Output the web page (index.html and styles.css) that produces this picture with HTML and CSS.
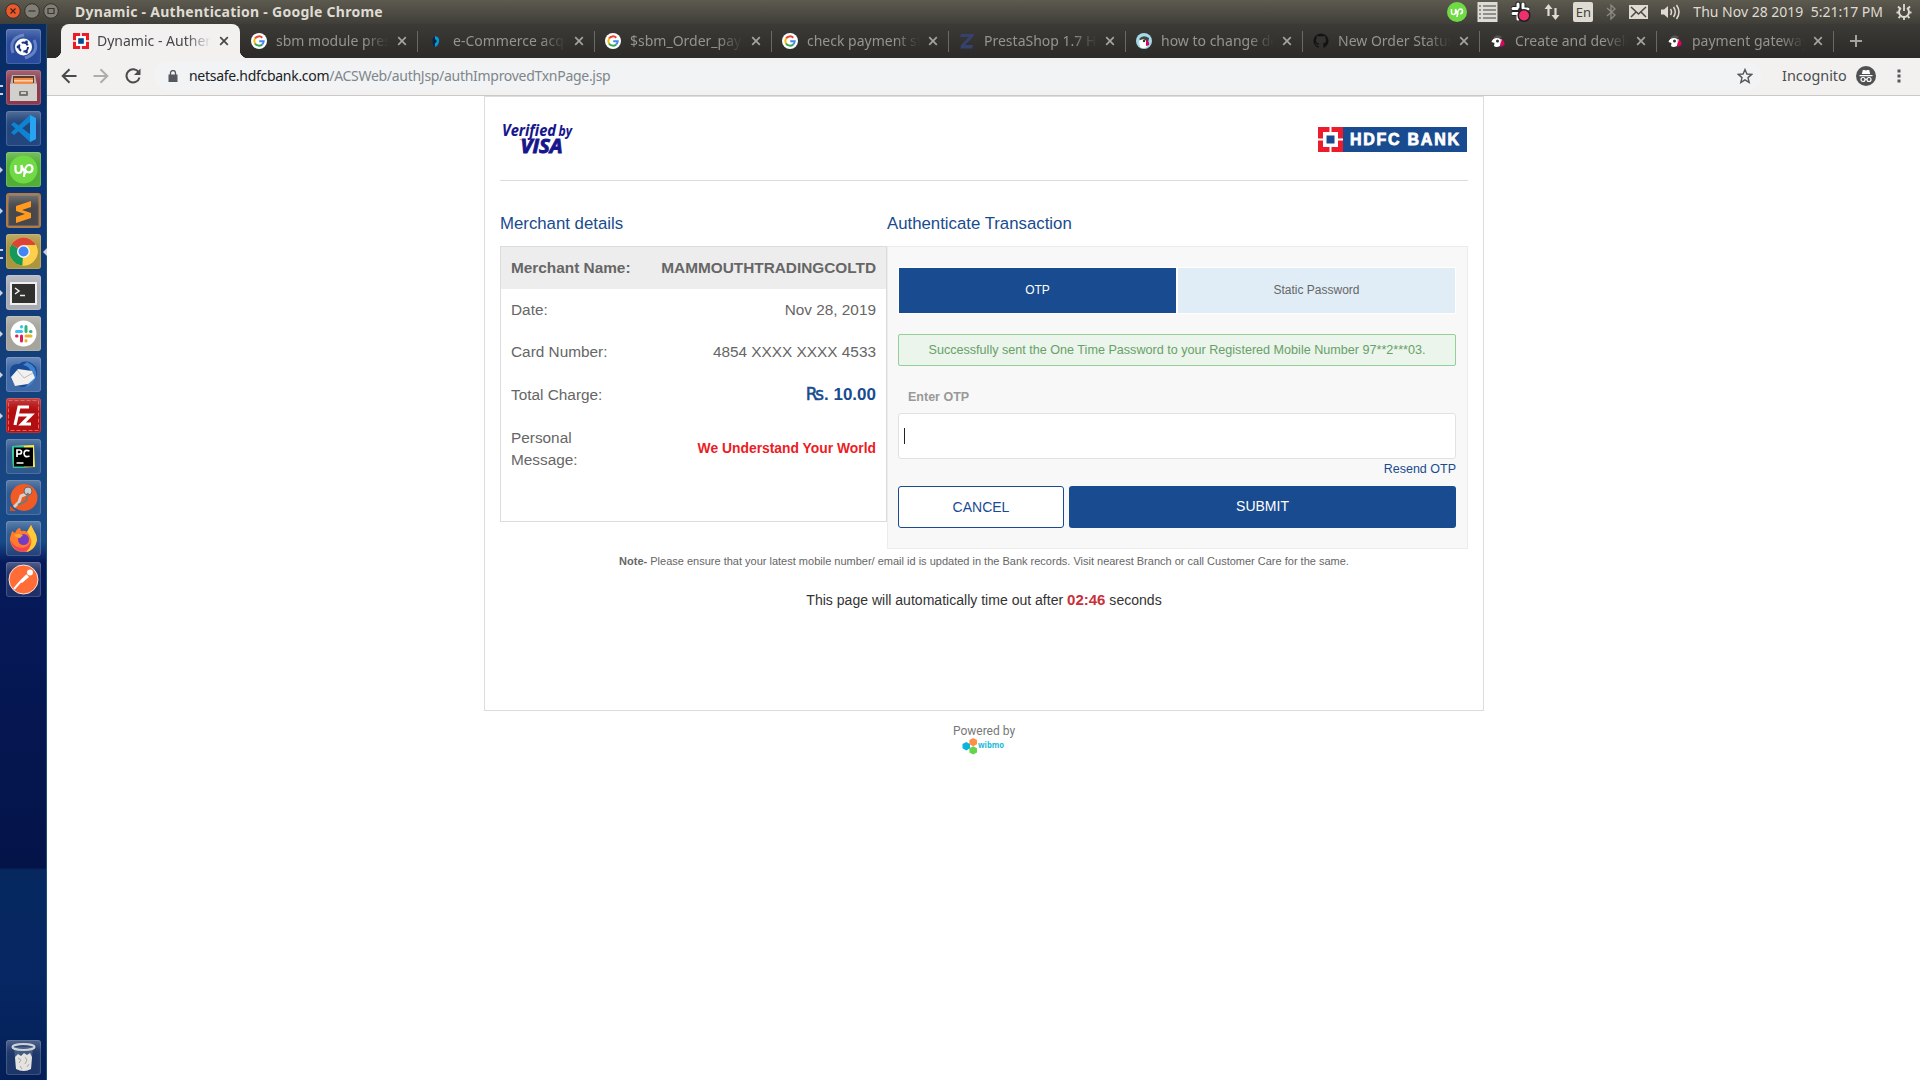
FILE: index.html
```html
<!DOCTYPE html>
<html lang="en">
<head>
<meta charset="utf-8">
<title>Dynamic - Authentication</title>
<link rel="stylesheet" href="styles.css">
</head>
<body>
<svg class="defs" aria-hidden="true">
  <symbol id="google" viewBox="0 0 16 16"><circle cx="8" cy="8" r="8" fill="#fff"/><g fill="none" stroke-width="2"><path d="M4 5.6A4.7 4.7 0 0 1 11.3 4.7" stroke="#ea4335"/><path d="M4 5.6a4.7 4.7 0 0 0 0 4.8" stroke="#fbbc05"/><path d="M4 10.4a4.7 4.7 0 0 0 7.2 1" stroke="#34a853"/><path d="M11.2 11.4A4.6 4.6 0 0 0 12.7 8.2H8.2" stroke="#4285f4"/></g></symbol>
  <symbol id="close" viewBox="0 0 10 10"><path d="M1.2 1.2l7.6 7.6M8.8 1.2L1.2 8.8" stroke="currentColor" stroke-width="1.7"/></symbol>
  <symbol id="puffin" viewBox="0 0 16 16"><path d="M3 5Q7 0 12 4l-2 2z" fill="#555"/><path d="M1.500 9q1-4 5.500-4 4 0 4 4l-1 4q-4 2-6 0l.5-3z" fill="#fff"/><circle cx="7.500" cy="8" r="1.500" fill="#333"/><path d="M11 6q4 2 3.500 6L10.500 14z" fill="#df0067"/><path d="M10 6l2 .5-1.500 4z" fill="#e9d9a0"/></symbol>
</svg>
<header class="menubar">
  <div class="window-buttons">
    <svg width="16" height="16" viewBox="0 0 16 16"><circle cx="8" cy="8" r="7.3" fill="#ec5a2b" stroke="#33312c"/><path d="M5.500 5.500l5 5m0-5l-5 5" stroke="#40241a" stroke-width="1.200"/></svg>
    <svg width="16" height="16" viewBox="0 0 16 16"><circle cx="8" cy="8" r="7.3" fill="#817e76" stroke="#33312c"/><path d="M4.500 8h7" stroke="#38362f" stroke-width="1.200"/></svg>
    <svg width="16" height="16" viewBox="0 0 16 16"><circle cx="8" cy="8" r="7.3" fill="#817e76" stroke="#33312c"/><path d="M5 5.500h6v5H5z" fill="none" stroke="#38362f" stroke-width="1.200"/></svg>
  </div>
  <div class="window-title">Dynamic - Authentication - Google Chrome</div>
  <div class="indicators">
    <svg class="up" width="20" height="22" viewBox="0 0 20 22"><circle cx="10" cy="11" r="10" fill="#6fda44"/><path d="M4.500 8v3.500q0 2 2 2t2-2V8q1 4 3 5.500M10 16q.5-8 3.500-8 2 0 2 2.300 0 2.500-2.400 2.500" fill="none" stroke="#fff" stroke-width="1.500"/></svg>
    <svg width="21" height="20" viewBox="0 0 21 20"><path d="M.5 0h20v20H.5z" fill="#dedcd7"/><path d="M2 4h2m2 0h13M2 8h2m2 0h13M2 12h2m2 0h13M2 16h2m2 0h13" stroke="#77756e" stroke-width="1.500"/></svg>
    <svg width="21" height="21" viewBox="0 0 21 21"><g stroke="#222" stroke-width="5" stroke-linecap="round"><path d="M8 3v4M13 3.500V8M3.500 7.500H8M13 8h4.500M3.500 12.500H8"/></g><g stroke="#fff" stroke-width="3" stroke-linecap="round"><path d="M8 3v3M13 3v4M3 7.500h4M14 8h4M3 12.500h5M8 13v5"/></g><circle cx="14" cy="14.500" r="5.800" fill="#f0306e" stroke="#222" stroke-width="1.500"/></svg>
    <svg width="18" height="18" viewBox="0 0 18 18"><path d="M5.500 13V4M12.500 5v9" stroke="#dfdbd2" stroke-width="2.200"/><path d="M1.500 6l4-5 4 5zM8.500 12l4 5 4-5z" fill="#dfdbd2"/></svg>
    <span class="keyboard">En</span>
    <svg width="12" height="18" viewBox="0 0 12 18"><path d="M2 5l8 7-4 4V2l4 4-8 7" fill="none" stroke="#8e8b83" stroke-width="1.300"/></svg>
    <svg width="19" height="14" viewBox="0 0 19 14"><path d="M0 0h19v14H0z" fill="#dfdbd2"/><path d="M2 2l7.500 7L17 2M2 12l5-5m10 5l-5-5" stroke="#494740" stroke-width="1.500" fill="none"/></svg>
    <svg width="21" height="18" viewBox="0 0 21 18"><path d="M1 6.500h3L8 3v12l-4-3.500H1z" fill="#dfdbd2"/><path d="M10.500 6q2 3 0 6M13.500 4q3.500 5 0 10M16.500 2q5 7 0 14" stroke="#dfdbd2" stroke-width="1.500" fill="none"/></svg>
    <span class="clock">Thu Nov 28 2019&nbsp; 5:21:17 PM</span>
    <svg width="18" height="18" viewBox="0 0 18 18"><path d="M6 5a5 5 0 1 0 6 0" fill="none" stroke="#dfdbd2" stroke-width="2"/><path d="M9 1v7M1.500 9.500h2m11 0h2M3 3.500l2 2M15 3.500l-2 2M3.500 15l1.700-1.700M14.500 15l-1.700-1.700M9 14v3" stroke="#dfdbd2" stroke-width="1.800"/></svg>
  </div>
</header>
<div class="desktop">
  <nav class="launcher">
    <div class="tile t-dash"><svg viewBox="0 0 35 35"><path d="M7 24Q2 9 18 6M28 11q6 13-9 18" fill="none" stroke="#8ea6d8" stroke-width="3" opacity=".6"/><circle cx="17.500" cy="18" r="8.500" fill="#fff"/><circle cx="17.500" cy="18" r="4.500" fill="none" stroke="#17357f" stroke-width="2" stroke-dasharray="7 2.400"/><circle cx="12" cy="18" r="1.400" fill="#17357f"/><circle cx="20.500" cy="13" r="1.400" fill="#17357f"/><circle cx="20.500" cy="23" r="1.400" fill="#17357f"/></svg></div>
    <div class="tile t-files run2"><svg viewBox="0 0 35 35"><path d="M6 5h23l2 10v16H4V15z" fill="#b9b6b0"/><path d="M7 6h21v7H7z" fill="#5b3b2c"/><path d="M8 8h19v6H8z" fill="#f08a4b"/><path d="M8 10h19v1.500H8z" fill="#ffd2a8"/><path d="M4 14h27v17H4z" fill="#d2d0cc"/><rect x="13" y="21" width="9" height="5" rx="1" fill="#77746e"/><path d="M15 23h5" stroke="#eee" stroke-width="1.500"/></svg></div>
    <div class="tile t-glass"><svg viewBox="0 0 35 35"><path d="M24 4l6 3v21l-6 3L5 13.500 8 11l16 12V11L8 24l-3-2.500z" fill="#0d83d2"/><path d="M24 4l6 3v21l-6 3z" fill="#27a3f2"/></svg></div>
    <div class="tile t-up run"><svg viewBox="0 0 35 35"><circle cx="17.500" cy="17.500" r="14" fill="#6fda44"/><path d="M9.500 13v5q0 3 3 3t3-3v-5q1.500 6 5 8M18 25q.5-12 5-12 3.500 0 3.500 3.500T23 20.500q-2 0-4-3" fill="none" stroke="#fff" stroke-width="2.200"/></svg></div>
    <div class="tile t-sublime run"><svg viewBox="0 0 35 35"><path d="M10 13l15-5v6l-9 3 9 3v5l-15 5v-6l9-3-9-3z" fill="#ff9a1f"/></svg></div>
    <div class="tile t-chrome run2 active"><svg viewBox="0 0 35 35"><circle cx="17.500" cy="17.500" r="14" fill="#fcd04b"/><path d="M17.500 17.500L5.400 10.500a14 14 0 0 1 24.200 0z" fill="#db4437"/><path d="M17.500 17.500L5.400 10.500a14 14 0 0 0 11 21l6-10z" fill="#149959"/><path d="M17.500 11h12.500a14 14 0 0 1-13.600 20.500z" fill="#fcd04b"/><circle cx="17.500" cy="17.500" r="6.500" fill="#f5f5f5"/><circle cx="17.500" cy="17.500" r="5" fill="#4285f4"/></svg></div>
    <div class="tile t-term run"><svg viewBox="0 0 35 35"><path d="M4 7h27v23H4z" fill="#eee"/><path d="M6 9h23v19H6z" fill="#30312f"/><path d="M9 13l4 3-4 3M14 20.500h5" fill="none" stroke="#eee" stroke-width="1.500"/></svg></div>
    <div class="tile t-slack run"><svg viewBox="0 0 35 35"><circle cx="17.500" cy="17.500" r="13" fill="#fff"/><g stroke-width="3" stroke-linecap="round"><path d="M15.500 10.500v.5M10.500 15.500h5" stroke="#36c5f0"/><path d="M20 10.500v5M24.500 15.500h.5" stroke="#2eb67d"/><path d="M15.500 20v5M10.500 20h.5" stroke="#e01e5a"/><path d="M20 20h5M20 24.500v.5" stroke="#ecb22e"/></g></svg></div>
    <div class="tile t-bird run"><svg viewBox="0 0 35 35"><path d="M4 18Q3 6 13 7q8-6 17 3 3 9-3 15-8 8-17 3-5-4-6-10z" fill="#1a4b95"/><path d="M21 5q11 5 9 15-3 8-11 11 7-9 6-15-1-7-8-8z" fill="#3f83cf"/><path d="M5 20l7-8 14 2 3 7-7 6-13 2z" fill="#f2f1f0"/><path d="M11 13l7 8 9-5" fill="none" stroke="#b9bcc4"/></svg></div>
    <div class="tile t-fz run"><svg viewBox="0 0 35 35"><path d="M2.500 2.500h30v30h-30z" fill="none" stroke="#d66" stroke-dasharray="4 2"/><path d="M9 27l4-18h10M11.500 17h8M16 17h9l-9 9h9" fill="none" stroke="#fff" stroke-width="3.200"/></svg></div>
    <div class="tile t-glass"><svg viewBox="0 0 35 35"><path d="M6 7l22-1 1 22-22 1z" fill="#f4e94e"/><path d="M6 7h12v22H7z" fill="#28c9a0"/><path d="M8 8.500h19v19H8z" fill="#000"/><path d="M11 18v-7h2.500q2 0 2 2t-2 2H11M23.500 12q-5-2-5.500 2.500.5 4.500 5.500 2.500M10.500 24h7" fill="none" stroke="#fff" stroke-width="1.700"/></svg></div>
    <div class="tile t-glass"><svg viewBox="0 0 35 35"><circle cx="18" cy="17.500" r="13.500" fill="#f15a24"/><path d="M4 26v5h6z" fill="#d9501f"/><path d="M8 27l5-5 2-6 8-3" fill="none" stroke="#d7d3cc" stroke-width="3"/><circle cx="22" cy="11" r="4" fill="#ccc" stroke="#666"/><path d="M12 25l8-4 2-8" fill="none" stroke="#777" stroke-width="2"/></svg></div>
    <div class="tile t-glass"><svg viewBox="0 0 35 35"><path d="M4 17l2-7 3 2q2-5 5-5l1 3q4-1 6 1l4-7 3 6q3 4 3 9-2 12-13.500 12T4 19z" fill="#ff7a2b"/><path d="M25 4l3 6q3 4 3 9-2 10-11 12 7-7 5-13-1-4-4-7z" fill="#ffc93a"/><path d="M4.500 19q4 8 12 8 6-1 8-6 0 8-7 10Q7 30 4.500 19z" fill="#f5415c"/><circle cx="17.500" cy="18.500" r="5.500" fill="#743cc4"/><path d="M8 14q5-2 9 0l-3 3q-4 0-6-3z" fill="#ffa52e"/></svg></div>
    <div class="tile t-glass"><svg viewBox="0 0 35 35"><circle cx="17.500" cy="17.500" r="14.500" fill="#ff6c37" stroke="#f5e5df"/><path d="M8 27l7-8 6-6" stroke="#fff" stroke-width="2"/><path d="M14 20l7-7 2 2-7 6z" fill="#fff"/><circle cx="24" cy="10.500" r="3" fill="#fff"/></svg></div>
    <div class="tile t-glass trash"><svg viewBox="0 0 35 35"><path d="M8 7l2 22q7 4 15 0l2-22z" fill="#7288a4" opacity=".45"/><path d="M9 17l3-3 3 2 3-3 3 2 3-2 2 4-1 12q-7 4-15 0z" fill="#e4e3df"/><path d="M12 18l3 2-2 3m6-6l2 3-2 4m4 0l-2 3m-7-1l2 3" stroke="#aaa9a3" fill="none"/><ellipse cx="17.500" cy="7" rx="11" ry="3" fill="none" stroke="#cfd3d6" stroke-width="2.200"/></svg></div>
  </nav>
  <div class="browser">
    <div class="tabstrip">
      <div class="tab current"><svg class="fav" viewBox="0 0 16 16"><path d="M0 0h16v16H0z" fill="#ed1c24"/><path d="M3 3h10v10H3zM7.200 0h1.600v16H7.200zM0 7.200h16v1.600H0z" fill="#fff"/><path d="M5.200 5.200h5.600v5.600H5.200z" fill="#004c8f"/></svg><span class="label">Dynamic - Authentication</span><svg class="x"><use href="#close"/></svg></div>
      <div class="tab"><svg class="fav"><use href="#google"/></svg><span class="label">sbm module prestashop</span><svg class="x"><use href="#close"/></svg></div>
      <div class="tab"><svg class="fav" viewBox="0 0 16 16"><path d="M7 3q-6 5 0 11z" fill="#152c50"/><path d="M7 3q5 1 4 6-1 4-4 5z" fill="#0799d4"/><path d="M5 4l4 4-4 5z" fill="#0c2344"/></svg><span class="label">e-Commerce acquiring</span><svg class="x"><use href="#close"/></svg></div>
      <div class="tab"><svg class="fav"><use href="#google"/></svg><span class="label">$sbm_Order_payment</span><svg class="x"><use href="#close"/></svg></div>
      <div class="tab"><svg class="fav"><use href="#google"/></svg><span class="label">check payment status</span><svg class="x"><use href="#close"/></svg></div>
      <div class="tab"><svg class="fav" viewBox="0 0 16 16"><path d="M2 1h13l-1 3-8 8h8l-1 3.500H1.500L2 12l8-8H1z" fill="#35426e"/></svg><span class="label">PrestaShop 1.7 Hooks</span><svg class="x"><use href="#close"/></svg></div>
      <div class="tab"><svg class="fav" viewBox="0 0 16 16"><circle cx="8" cy="8" r="8" fill="#a4dbe8"/><path d="M3 6q4-5 10-1l-1 5-3 1z" fill="#444"/><path d="M3 8q5-4 8 1v5q-4 2-7 0z" fill="#fff"/><path d="M10 7q4 2 3 5l-3 1z" fill="#df0067"/><circle cx="8" cy="8" r="1.200" fill="#333"/></svg><span class="label">how to change default</span><svg class="x"><use href="#close"/></svg></div>
      <div class="tab"><svg class="fav" viewBox="0 0 16 16"><path d="M8 .5a7.500 7.500 0 0 0-2.400 14.600v-2.300q-2 .4-2.700-1.200-.5-1.200-1-1.500 1-.2 1.700.9.800 1.200 2.100.6l.4-1Q3 10.200 3 7q0-1.200.8-2.100-.3-1 .1-2.200 1 0 2.200.9 2-.5 3.900 0 1.200-.9 2.100-.9.5 1.200.1 2.200.8.9.8 2.100 0 3.200-3.100 3.600.5.6.5 1.500v3A7.500 7.500 0 0 0 8 .5z" fill="#131313"/></svg><span class="label">New Order Status</span><svg class="x"><use href="#close"/></svg></div>
      <div class="tab"><svg class="fav"><use href="#puffin"/></svg><span class="label">Create and develop</span><svg class="x"><use href="#close"/></svg></div>
      <div class="tab"><svg class="fav"><use href="#puffin"/></svg><span class="label">payment gateway</span><svg class="x"><use href="#close"/></svg></div>
      <svg class="newtab" viewBox="0 0 12 12"><path d="M6 0v12M0 6h12" stroke="#a5a39d" stroke-width="2"/></svg>
    </div>
    <div class="toolbar">
      <svg width="16" height="16" viewBox="0 0 16 16"><path d="M15.500 8H2M8.500 1.200L1.700 8l6.800 6.800" fill="none" stroke="#494a4b" stroke-width="2"/></svg>
      <svg width="16" height="16" viewBox="0 0 16 16"><path d="M.5 8H14M7.500 1.200L14.300 8l-6.800 6.800" fill="none" stroke="#adadac" stroke-width="2"/></svg>
      <svg width="16" height="16" viewBox="0 0 16 16"><path d="M13.800 4.500A6.600 6.600 0 1 0 14.500 9.500" fill="none" stroke="#494a4b" stroke-width="2"/><path d="M15.500.5v6.500H9z" fill="#494a4b"/></svg>
      <div class="omnibox">
        <svg width="10" height="12" viewBox="0 0 10 12"><path d="M.5 4.500h9V12h-9z" fill="#55585c"/><path d="M2.500 5V3a2.500 2.500 0 0 1 5 0v2" fill="none" stroke="#55585c" stroke-width="1.300"/></svg>
        <span class="url"><b>netsafe.hdfcbank.com</b>/ACSWeb/authJsp/authImprovedTxnPage.jsp</span>
        <svg width="16" height="16" viewBox="0 0 16 16"><path d="M8 1.500l1.900 4.500 4.800.4-3.700 3.200 1.200 4.800L8 11.800l-4.200 2.600L5 9.600 1.300 6.400 6.100 6z" fill="none" stroke="#55585c" stroke-width="1.400"/></svg>
      </div>
      <span class="incognito">Incognito</span>
      <svg width="20" height="20" viewBox="0 0 20 20"><circle cx="10" cy="10" r="10" fill="#505153"/><path d="M6.800 4h1.800l1.400.5 1.400-.5h1.800l1 4H5.800zM3.500 9h13v1.200h-13z" fill="#fff"/><circle cx="7" cy="13.500" r="2" fill="none" stroke="#fff" stroke-width="1.200"/><circle cx="13" cy="13.500" r="2" fill="none" stroke="#fff" stroke-width="1.200"/><path d="M9 13.300h2" stroke="#fff"/></svg>
      <svg class="dots" width="4" height="14" viewBox="0 0 4 14"><path d="M.5.5h3v3h-3zM.5 5.500h3v3h-3zM.5 10.500h3v3h-3z" fill="#55565a"/></svg>
    </div>
    <main class="page">
      <section class="card">
        <div class="brands">
          <svg class="vbv" width="72" height="36" viewBox="0 0 72 36"><path d="M16.500 17h6l1.500 7q-2.500-5.500-7.500-7z" fill="#e8a33d"/><g fill="#16168c" stroke="#16168c" font-family="Open Sans, sans-serif" font-style="italic" font-weight="700"><text x="0" y="13.500" font-size="16.500" stroke-width=".1" textLength="54" lengthAdjust="spacingAndGlyphs">Verified</text><text x="56.500" y="13.500" font-size="13.500" stroke-width=".1" textLength="13.500" lengthAdjust="spacingAndGlyphs">by</text><text x="18.500" y="31" font-size="19.500" stroke-width=".9" textLength="42" lengthAdjust="spacingAndGlyphs">VISA</text></g></svg>
          <svg class="hdfc" width="149" height="25" viewBox="0 0 149 25"><path d="M0 0h149v25H0z" fill="#184b8f"/><path d="M0 0h25v25H0z" fill="#ed1c2c"/><path d="M5 5h15v15H5zM11.500 0h2v25h-2zM0 11.500h25v2H0z" fill="#fff"/><path d="M8.500 8.500h8v8h-8z" fill="#184b8f"/><text x="32" y="18" font-family="Liberation Sans, sans-serif" font-weight="700" font-size="16" textLength="109" lengthAdjust="spacing" fill="#fff" stroke="#fff" stroke-width=".8">HDFC BANK</text></svg>
        </div>
        <div class="columns">
          <div class="merchant">
            <h2>Merchant details</h2>
            <div class="details">
              <div class="row head"><span>Merchant Name:</span><span>MAMMOUTHTRADINGCOLTD</span></div>
              <div class="row"><span>Date:</span><span>Nov 28, 2019</span></div>
              <div class="row"><span>Card Number:</span><span>4854 XXXX XXXX 4533</span></div>
              <div class="row total"><span>Total Charge:</span><strong><span class="rupee">₨</span>. 10.00</strong></div>
              <div class="row message"><span>Personal<br>Message:</span><em>We Understand Your World</em></div>
            </div>
          </div>
          <div class="auth">
            <h2>Authenticate Transaction</h2>
            <div class="panel">
              <div class="methods"><span class="on">OTP</span><span>Static Password</span></div>
              <p class="notice">Successfully sent the One Time Password to your Registered Mobile Number 97**2***03.</p>
              <label>Enter OTP</label>
              <div class="field"><i class="caret"></i></div>
              <a class="resend">Resend OTP</a>
              <div class="actions"><span class="cancel">CANCEL</span><span class="submit">SUBMIT</span></div>
            </div>
          </div>
        </div>
        <p class="note"><b>Note-</b> Please ensure that your latest mobile number/ email id is updated in the Bank records. Visit nearest Branch or call Customer Care for the same.</p>
        <p class="timeout">This page will automatically time out after <b>02:46</b> seconds</p>
      </section>
      <footer class="powered">Powered by
        <svg width="43" height="17" viewBox="0 0 43 17"><path d="M4.300 4l3.700 2v4.300l-3.700 2.200L.5 10.300V6z" fill="#0ab4dc"/><path d="M11.200 0L15 2v4.200l-3.800 2-3.800-2V2z" fill="#ff8f47"/><path d="M11.200 8.300l3.800 2v4.200l-3.800 2-3.800-2v-4.200z" fill="#63d44c"/><text x="16" y="10" font-family="Open Sans, sans-serif" font-weight="700" font-size="8" textLength="26" lengthAdjust="spacingAndGlyphs" fill="#1cb9d8">wibmo</text></svg>
      </footer>
    </main>
  </div>
</div>
</body>
</html>
```
FILE: styles.css
```css
* { box-sizing: border-box; }
body { margin: 0; width: 1920px; height: 1080px; overflow: hidden; background: #fff; font-family: "Liberation Sans", Arial, sans-serif; display: flex; flex-direction: column; }
.defs { display: none; }
svg { display: block; flex: none; }
p, h2 { margin: 0; }

.menubar { height: 24px; background: linear-gradient(#5d5a4f, #3f3e38); display: flex; align-items: center; font-family: "Noto Sans", sans-serif; color: #dfdbd2; padding-left: 5px; padding-bottom: 1px; }
.window-buttons { display: flex; gap: 3px; width: 70px; margin-top: -1px; }
.window-title { font-weight: 700; font-size: 14px; letter-spacing: .27px; flex: 1; }
.indicators { display: flex; align-items: center; gap: 12px; padding-right: 7px; }
.indicators .up { margin-right: -2px; }
.keyboard { width: 20px; height: 20px; border-radius: 2px; background: #dfdbd2; color: #45433c; font-size: 13px; line-height: 20px; text-align: center; }
.clock { font-size: 14px; white-space: nowrap; }

.desktop { flex: 1; display: flex; min-height: 0; }
.launcher { width: 47px; flex: none; padding: 5px 6px; display: flex; flex-direction: column; gap: 6px; background: linear-gradient(#082b62, #0b3474 15%, #15417c 35%, #184a88 49%, #06195a 51%, #041449 79.900%, #06285f 80.100%, #062763 90%, #041f58); border-right: 1px solid #214f71; }
.tile { position: relative; width: 35px; height: 35px; border-radius: 3px; box-shadow: inset 0 0 0 1px rgba(255,255,255,.14), inset 0 10px 10px -5px rgba(255,255,255,.25); flex: none; }
.tile svg { width: 35px; height: 35px; }
.trash { margin-top: auto; }
.t-glass { background-color: rgba(255,255,255,.1); }
.t-dash { background-color: #284a9c; }
.t-files { background-color: #8c3a4e; }
.t-up { background-color: #52ad37; }
.t-sublime { background-color: #48484a; border: 2px solid #b37a44; }
.t-sublime svg { margin: -2px; }
.t-chrome { background-color: #ab953e; }
.t-term { background-color: #a9abb3; }
.t-slack { background-color: #a5a59d; }
.t-bird { background-color: #4069a8; }
.t-fz { background-color: #b30e10; }
.run::before, .run2::before { content: ""; position: absolute; left: -7px; top: 14px; border: 4px solid transparent; border-left-color: #ccd2da; }
.t-sublime::before { left: -9px; top: 12px; }
.run2::before { width: 3px; height: 6px; top: 15px; left: -6px; border: solid #ccd2da; border-width: 2px 0; }
.active::after { content: ""; position: absolute; right: -6px; top: 14px; border: 4px solid transparent; border-right-color: #ccd2da; border-left: 0; }

.browser { flex: 1; display: flex; flex-direction: column; min-width: 0; }
.tabstrip { height: 34px; background: linear-gradient(#3c3b37, #2b2a28); display: flex; align-items: center; padding-left: 14px; font-family: "Noto Sans", sans-serif; font-size: 14px; color: #96948e; }
.tab { position: relative; width: 177px; height: 34px; display: flex; align-items: center; padding: 0 10px 0 11px; }
.tab:not(.current)::after { content: ""; position: absolute; right: -1px; top: 7px; width: 1px; height: 21px; background: #6b6963; }
.tab.current { width: 179px; padding: 0 10px 0 12px; background: #f2f1f0; color: #45474a; border-radius: 8px 8px 0 0; }
.tab.current::before, .tab.current::after { content: ""; position: absolute; bottom: 0; width: 8px; height: 8px; }
.tab.current::before { left: -8px; background: radial-gradient(circle at 0 0, transparent 8px, #f2f1f0 8.500px); }
.tab.current::after { right: -8px; background: radial-gradient(circle at 100% 0, transparent 8px, #f2f1f0 8.500px); }
.fav { width: 16px; height: 16px; margin-right: 9px; }
.current .fav { margin-right: 8px; }
.label { width: 113px; margin: -2px 8px 0 0; overflow: hidden; white-space: nowrap; -webkit-mask-image: linear-gradient(90deg, #000 78%, transparent); mask-image: linear-gradient(90deg, #000 78%, transparent); }
.current .label { width: 114px; }
.x { width: 10px; height: 10px; color: #a5a39d; }
.current .x { color: #45474a; }
.newtab { width: 12px; height: 12px; margin-left: 17px; }

.toolbar { height: 38px; background: #f2f1f0; border-bottom: 1px solid #cbcac8; display: flex; align-items: center; padding: 0 0 1px 14px; font-family: "Noto Sans", sans-serif; font-size: 14px; }
.toolbar > svg { margin-right: 16px; }
.omnibox { width: 1607px; height: 28px; border-radius: 14px; background: #f1f3f4; display: flex; align-items: center; padding: 0 8px 0 14px; margin-left: -3px; gap: 11px; }
.url { flex: 1; color: #80868b; letter-spacing: -.29px; margin-top: -1px; }
.url b { font-weight: 400; color: #202124; }
.incognito { margin: -1px 9px 0 21px; color: #4c4e51; font-size: 14.400px; }
.toolbar > svg.dots { margin: 0 0 0 5px; }

.page { flex: 1; display: flex; flex-direction: column; align-items: center; padding-left: 1px; }
.card { width: 1000px; height: 615px; border: 1px solid #dcdcdc; padding: 0 15px; }
.brands { height: 84px; border-bottom: 1px solid #dcdcdc; display: flex; justify-content: space-between; padding: 25px 0 0 2px; }
.vbv { overflow: visible; }
.hdfc { margin: 5px 1px 0 0; }
.columns { display: flex; }
h2 { height: 65px; padding-top: 33px; line-height: 20px; font-size: 16.800px; font-weight: 400; color: #184b8f; }
.merchant { width: 387px; }
.details { height: 276px; border: 1px solid #dcdcdc; color: #666; font-size: 15.360px; }
.row { height: 42px; display: flex; justify-content: space-between; align-items: center; padding: 0 10px; line-height: 22px; }
.head { background: #ededed; font-weight: 700; }
.total { height: 43px; }
.total strong { color: #184b8f; font-size: 17px; }
.rupee { font-family: "DejaVu Sans", sans-serif; font-weight: 400; -webkit-text-stroke: .5px #184b8f; }
.message { height: 66px; }
.message em { font-style: normal; font-weight: 700; color: #ed1c24; font-size: 13.860px; margin-top: -2px; }
.auth { flex: 1; }
.panel { height: 303px; background: #f8f8f8; border: 1px solid #ececec; padding: 20px 11px 0 10px; display: flex; flex-direction: column; }
.methods { height: 47px; border: 1px solid #fff; background: #fff; display: grid; grid-template-columns: 1fr 1fr; gap: 2px; font-size: 12px; line-height: 45px; text-align: center; color: #666; }
.methods > span { background: #e0edf7; }
.methods > .on { background: #184b8f; color: #fff; }
.notice { margin-top: 20px; height: 32px; border: 1px solid #93cf96; border-radius: 2px; background: #ebf5eb; color: #68a06a; font-size: 12.600px; line-height: 30px; text-align: center; }
label { margin: 20px 0 0 10px; height: 27px; line-height: 23px; font-size: 12.500px; font-weight: 700; color: #999; }
.field { height: 46px; border: 1px solid #e2e2e2; border-radius: 3px; background: #fff; padding: 14px 5px; }
.caret { display: block; width: 1px; height: 16px; background: #222; }
.resend { height: 27px; line-height: 20px; font-size: 12.500px; color: #184b8f; text-align: right; }
.actions { display: flex; gap: 5px; height: 42px; font-size: 14px; text-align: center; }
.cancel { width: 166px; border: 1px solid #184b8f; border-radius: 3px; background: #fff; color: #184b8f; line-height: 41px; }
.submit { flex: 1; border-radius: 3px; background: #184b8f; color: #fff; line-height: 40px; }
.note { margin-top: 2px; height: 20px; line-height: 20px; font-size: 11px; text-align: center; color: #666; }
.timeout { margin-top: 19px; line-height: 20px; font-size: 14.050px; text-align: center; color: #333; }
.timeout b { color: #c9303a; font-size: 15px; }
.powered { margin-top: 13px; display: flex; flex-direction: column; align-items: center; font-family: Roboto, sans-serif; font-size: 12px; line-height: 14px; color: #777; }
```
